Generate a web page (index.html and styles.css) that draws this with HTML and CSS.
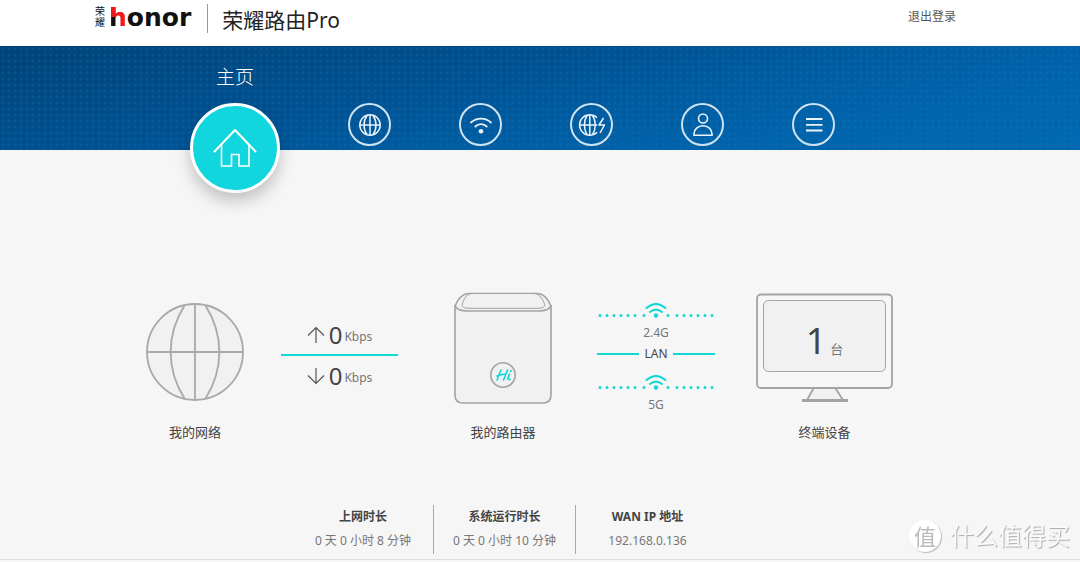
FILE: index.html
```html
<!DOCTYPE html>
<html lang="zh-CN">
<head>
<meta charset="utf-8">
<meta name="viewport" content="width=device-width, initial-scale=1">
<title>荣耀路由Pro</title>
<link rel="stylesheet" href="styles.css">
</head>
<body>
<header class="header">
  <div class="brand">
    <span class="brand-cn">荣耀</span>
    <span class="brand-en"><span class="brand-h">h</span>onor</span>
  </div>
  <h1 class="product">荣耀路由Pro</h1>
  <a class="logout" href="#">退出登录</a>
</header>

<nav class="hero" aria-label="主导航">
  <div class="nav-label">主页</div>
  <div class="nav">
    <button class="nav-btn nav-home" aria-label="主页">
      <svg width="44" height="40" viewBox="0 0 44 40" fill="none" stroke="#fff" stroke-width="2" stroke-linecap="round" stroke-linejoin="round"><path d="M1.500 23.500 22 2l20.500 21.500"/><path stroke-linecap="butt" stroke-width="1.600" stroke-linejoin="miter" d="M8.500 17v21h10V26.500h7.500V38h10V17"/></svg>
    </button>
    <button class="nav-btn" aria-label="上网">
      <svg width="24" height="24" viewBox="0 0 24 24" fill="none" stroke="#eaf3fa" stroke-width="1.500"><circle cx="12" cy="12" r="10.200"/><path d="M12 2v20M2 12h20M9 2.500C5 8 5 16 9 21.500M15 2.500c4 5.500 4 13.500 0 19"/></svg>
    </button>
    <button class="nav-btn" aria-label="Wi-Fi">
      <svg width="24" height="24" viewBox="0 0 24 24" fill="none" stroke="#eaf3fa" stroke-width="1.800" stroke-linecap="round"><path d="M2 9.500c5.500-5.300 14.500-5.300 20 0M6.300 13.500c3.200-3.100 8.200-3.100 11.400 0"/><circle cx="12" cy="18.300" r="2.300" fill="#eaf3fa" stroke="none"/></svg>
    </button>
    <button class="nav-btn" aria-label="加速">
      <svg width="28" height="24" viewBox="0 0 28 24" fill="none" stroke="#eaf3fa" stroke-width="1.500" stroke-linejoin="round"><path d="M19 4.800A10.200 10.200 0 1 0 19 19.200"/><path d="M11.800 2v20M1.800 12h17.500M9 2.500c-3.500 5.500-3.500 13.500 0 19M14.600 2.500c3.500 5.500 3.500 13.500 0 19M25.500 5l-4.500 7h5.500l-4.500 8"/></svg>
    </button>
    <button class="nav-btn" aria-label="用户">
      <svg width="24" height="26" viewBox="0 0 24 26" fill="none" stroke="#eaf3fa" stroke-width="1.600"><circle cx="12" cy="6.500" r="4.500"/><path d="M3 23.300v-1.500a9 8 0 0 1 18 0v1.500z"/></svg>
    </button>
    <button class="nav-btn" aria-label="更多">
      <svg width="24" height="24" viewBox="0 0 24 24" fill="none" stroke="#eaf3fa" stroke-width="1.800"><path d="M4 6h16.500M4 11.800h16.500M4 17.500h16.500"/></svg>
    </button>
  </div>
</nav>

<main>
  <section class="topology">
    <figure class="device">
      <svg width="98" height="112" viewBox="0 0 98 112" fill="none" stroke="#a9a9a9" stroke-width="1.800"><circle cx="49" cy="60" r="48" fill="#f1f1f1"/><path d="M49 12v96M1 60h96M38.500 13.500C20 43 20 77 38.500 106.500M59.500 13.500C78 43 78 77 59.500 106.500"/></svg>
      <figcaption>我的网络</figcaption>
    </figure>

    <div class="speed">
      <div class="rate">
        <svg width="18" height="18" viewBox="0 0 18 18" fill="none" stroke="#555" stroke-width="1.200"><path d="M9 17V1.500M1 9.500l8-8 8 8"/></svg>
        <span class="num">0</span><span class="unit">Kbps</span>
      </div>
      <div class="rule"></div>
      <div class="rate">
        <svg width="18" height="18" viewBox="0 0 18 18" fill="none" stroke="#555" stroke-width="1.200"><path d="M9 1v15.500M1 8.500l8 8 8-8"/></svg>
        <span class="num">0</span><span class="unit">Kbps</span>
      </div>
    </div>

    <figure class="device">
      <svg width="98" height="112" viewBox="0 0 98 112" fill="#f1f1f1" stroke="#a3a3a3" stroke-width="1.600"><path d="M1 14v89q0 8 8 8h80q8 0 8-8V14z"/><path d="M1 14Q6 1.500 15 1.500h68Q92 1.500 97 14q-3 5-12 5H13Q4 19 1 14z"/><path stroke-width="1" d="M8 13Q11 1.500 18 1.500h62Q87 1.500 91 13 90 16.300 84 16.300H15Q8 16.300 8 13z"/><circle cx="49" cy="83" r="12.200"/><path d="M47 78l-4 10M53.500 78l-4 10M43 84q5-2 9-2M55.500 82l-1.500 4q-.5 2 2 1.300M57 78.500l-.3.800" fill="none" stroke="#12d6d6" stroke-linecap="round"/></svg>
      <figcaption>我的路由器</figcaption>
    </figure>

    <div class="links">
      <svg class="signal" width="118" height="20" viewBox="0 0 118 20"><path d="M3 14.500h37" class="dots"/><path d="M71 14.500h1M80 14.500h36M47 14.500h1" class="dots"/><path class="wave" d="M49.500 7q9.500-8 19 0M53 11q6-4.500 12 0"/><circle cx="59" cy="14.500" r="2.200" fill="#12d6d6"/></svg>
      <div class="band">2.4G</div>
      <div class="lan">LAN</div>
      <svg class="signal" width="118" height="20" viewBox="0 0 118 20"><path d="M3 14.500h37" class="dots"/><path d="M71 14.500h1M80 14.500h36M47 14.500h1" class="dots"/><path class="wave" d="M49.500 7q9.500-8 19 0M53 11q6-4.500 12 0"/><circle cx="59" cy="14.500" r="2.200" fill="#12d6d6"/></svg>
      <div class="band">5G</div>
    </div>

    <figure class="device">
      <div class="monitor">
        <svg width="137" height="112" viewBox="0 0 137 112" fill="#f1f1f1" stroke="#a3a3a3" stroke-width="1.800"><path d="M58 95.500 51 108h36l-8-12.500"/><path d="M46 108.500h46" stroke-width="3"/><rect x="1" y="2.500" width="135" height="93.500" rx="4" fill="#f6f6f6"/><rect x="7.500" y="8.500" width="122" height="71" rx="5" stroke-width="1"/></svg>
        <div class="count"><span class="count-num">1</span><span class="count-unit">台</span></div>
      </div>
      <figcaption>终端设备</figcaption>
    </figure>
  </section>

  <dl class="stats">
    <div class="stat"><dt>上网时长</dt><dd>0 天 0 小时 8 分钟</dd></div>
    <div class="stat"><dt>系统运行时长</dt><dd>0 天 0 小时 10 分钟</dd></div>
    <div class="stat"><dt>WAN IP 地址</dt><dd>192.168.0.136</dd></div>
  </dl>
</main>

<div class="watermark"><span class="seal">值</span><span>什么值得买</span></div>
</body>
</html>
```

FILE: styles.css
```css
* { box-sizing: border-box; }

body {
  margin: 0;
  background: #f6f6f6;
  color: #444;
  font: 12px/20px "Noto Sans", "Noto Sans CJK SC", sans-serif;
}

h1, figure, dl, dd { margin: 0; }

.header {
  display: flex;
  align-items: flex-start;
  height: 46px;
  padding: 4px 124px 0 95px;
  background: #fff;
}

.brand {
  display: flex;
  gap: 3px;
  height: 29px;
  padding-right: 16px;
  border-right: 1px solid #999;
  color: #111;
}

.brand-cn {
  width: 11px;
  padding-top: 2px;
  font-size: 10px;
  line-height: 11px;
  overflow-wrap: anywhere;
}

.brand-en { font: bold 25px/28px "DejaVu Sans", sans-serif; }

.brand-h {
  color: transparent;
  background: linear-gradient(#f2191c, #f2191c) top / 100% 14px no-repeat,
    linear-gradient(to right, #111 45%, #f2191c 45%);
  -webkit-background-clip: text;
  background-clip: text;
}

.product {
  padding-left: 14px;
  color: #222;
  font-size: 21px;
  font-weight: 400;
  line-height: 32px;
}

.logout {
  margin-left: auto;
  padding-top: 3px;
  color: #555;
  text-decoration: none;
}

.hero {
  height: 104px;
  padding: 17px 0 0 190px;
  background: linear-gradient(175deg, rgba(0, 70, 125, 0) 20%, rgba(0, 95, 165, .3) 100%),
    radial-gradient(circle at 3px 3px, rgba(60, 150, 210, .14) 1px, transparent 2px) 0 0 / 6px 6px,
    linear-gradient(168deg, #00447a 0%, #005090 38%, #0064ac 75%, #006db6 100%);
}

.nav-label {
  width: 90px;
  color: #fff;
  font-size: 19px;
  font-weight: 300;
  line-height: 28px;
  text-align: center;
}

.nav {
  display: flex;
  align-items: flex-start;
  gap: 68px;
  padding-top: 12px;
}

.nav-btn {
  display: grid;
  place-items: center;
  flex: none;
  width: 43px;
  height: 43px;
  padding: 0;
  border: 2px solid #cfe2f0;
  border-radius: 50%;
  background: none;
  cursor: pointer;
}

.nav-home {
  width: 90px;
  height: 90px;
  border: 3px solid #fff;
  background: #12d6de;
  box-shadow: 0 8px 16px rgba(0, 0, 0, .22);
}

.topology {
  display: grid;
  grid-template-columns: 98px 211fr 98px 204fr 137px;
  padding: 142px 187px 0 146px;
}

.device {
  display: flex;
  flex-direction: column;
  align-items: center;
  gap: 18px;
  font-size: 13px;
}

.device svg, .links svg { display: block; }

.speed { padding: 27px 56px 0 37px; }

.rate {
  display: flex;
  align-items: center;
  justify-content: center;
  height: 32px;
}

.num {
  margin-left: 4px;
  font-size: 24px;
  line-height: 32px;
}

.unit {
  padding-top: 4px;
  margin-left: 2px;
  color: #777;
}

.rule {
  height: 2px;
  margin: 3px 0 4px;
  background: #12d8d4;
}

.links {
  display: flex;
  flex-direction: column;
  align-items: center;
  padding: 9px 41px 0 45px;
}

.dots {
  fill: none;
  stroke: #12d6d6;
  stroke-width: 3;
  stroke-linecap: round;
  stroke-dasharray: 0 7;
}

.wave {
  fill: none;
  stroke: #12d6d6;
  stroke-width: 2;
  stroke-linecap: round;
}

.band {
  padding-top: 2px;
  color: #777;
}

.lan {
  display: flex;
  align-items: center;
  gap: 5px;
  width: 100%;
  margin: 1px 0 9px;
}

.lan::before, .lan::after {
  content: "";
  flex: 1;
  height: 2px;
  background: #12d8d4;
}

.monitor { display: grid; }

.monitor > * { grid-area: 1 / 1; }

.count {
  display: flex;
  align-items: baseline;
  justify-content: center;
  gap: 4px;
  padding-top: 27px;
}

.count-num {
  font-size: 36px;
  line-height: 44px;
}

.count-unit { color: #777; }

.stats {
  display: grid;
  grid-template-columns: 140px 142px 144px;
  padding: 63px 0 5px 293px;
  border-bottom: 1px solid #ddd;
  text-align: center;
}

.stat { padding: 2px 0 3px; }

.stat + .stat { border-left: 1px solid #aaa; }

.stat dt { font-weight: bold; }

.stat dd {
  margin-top: 4px;
  color: #777;
}

.watermark {
  position: fixed;
  right: 10px;
  bottom: 10px;
  display: flex;
  align-items: center;
  gap: 9px;
  color: #fafafa;
  font-size: 24px;
  line-height: 32px;
  text-shadow: 1px 1px 1px #aaa;
}

.seal {
  width: 32px;
  height: 32px;
  border-radius: 50%;
  background: #fff;
  box-shadow: 1px 1px 1px #bbb;
  color: #bbb;
  font-size: 22px;
  text-align: center;
  text-shadow: none;
}
```
